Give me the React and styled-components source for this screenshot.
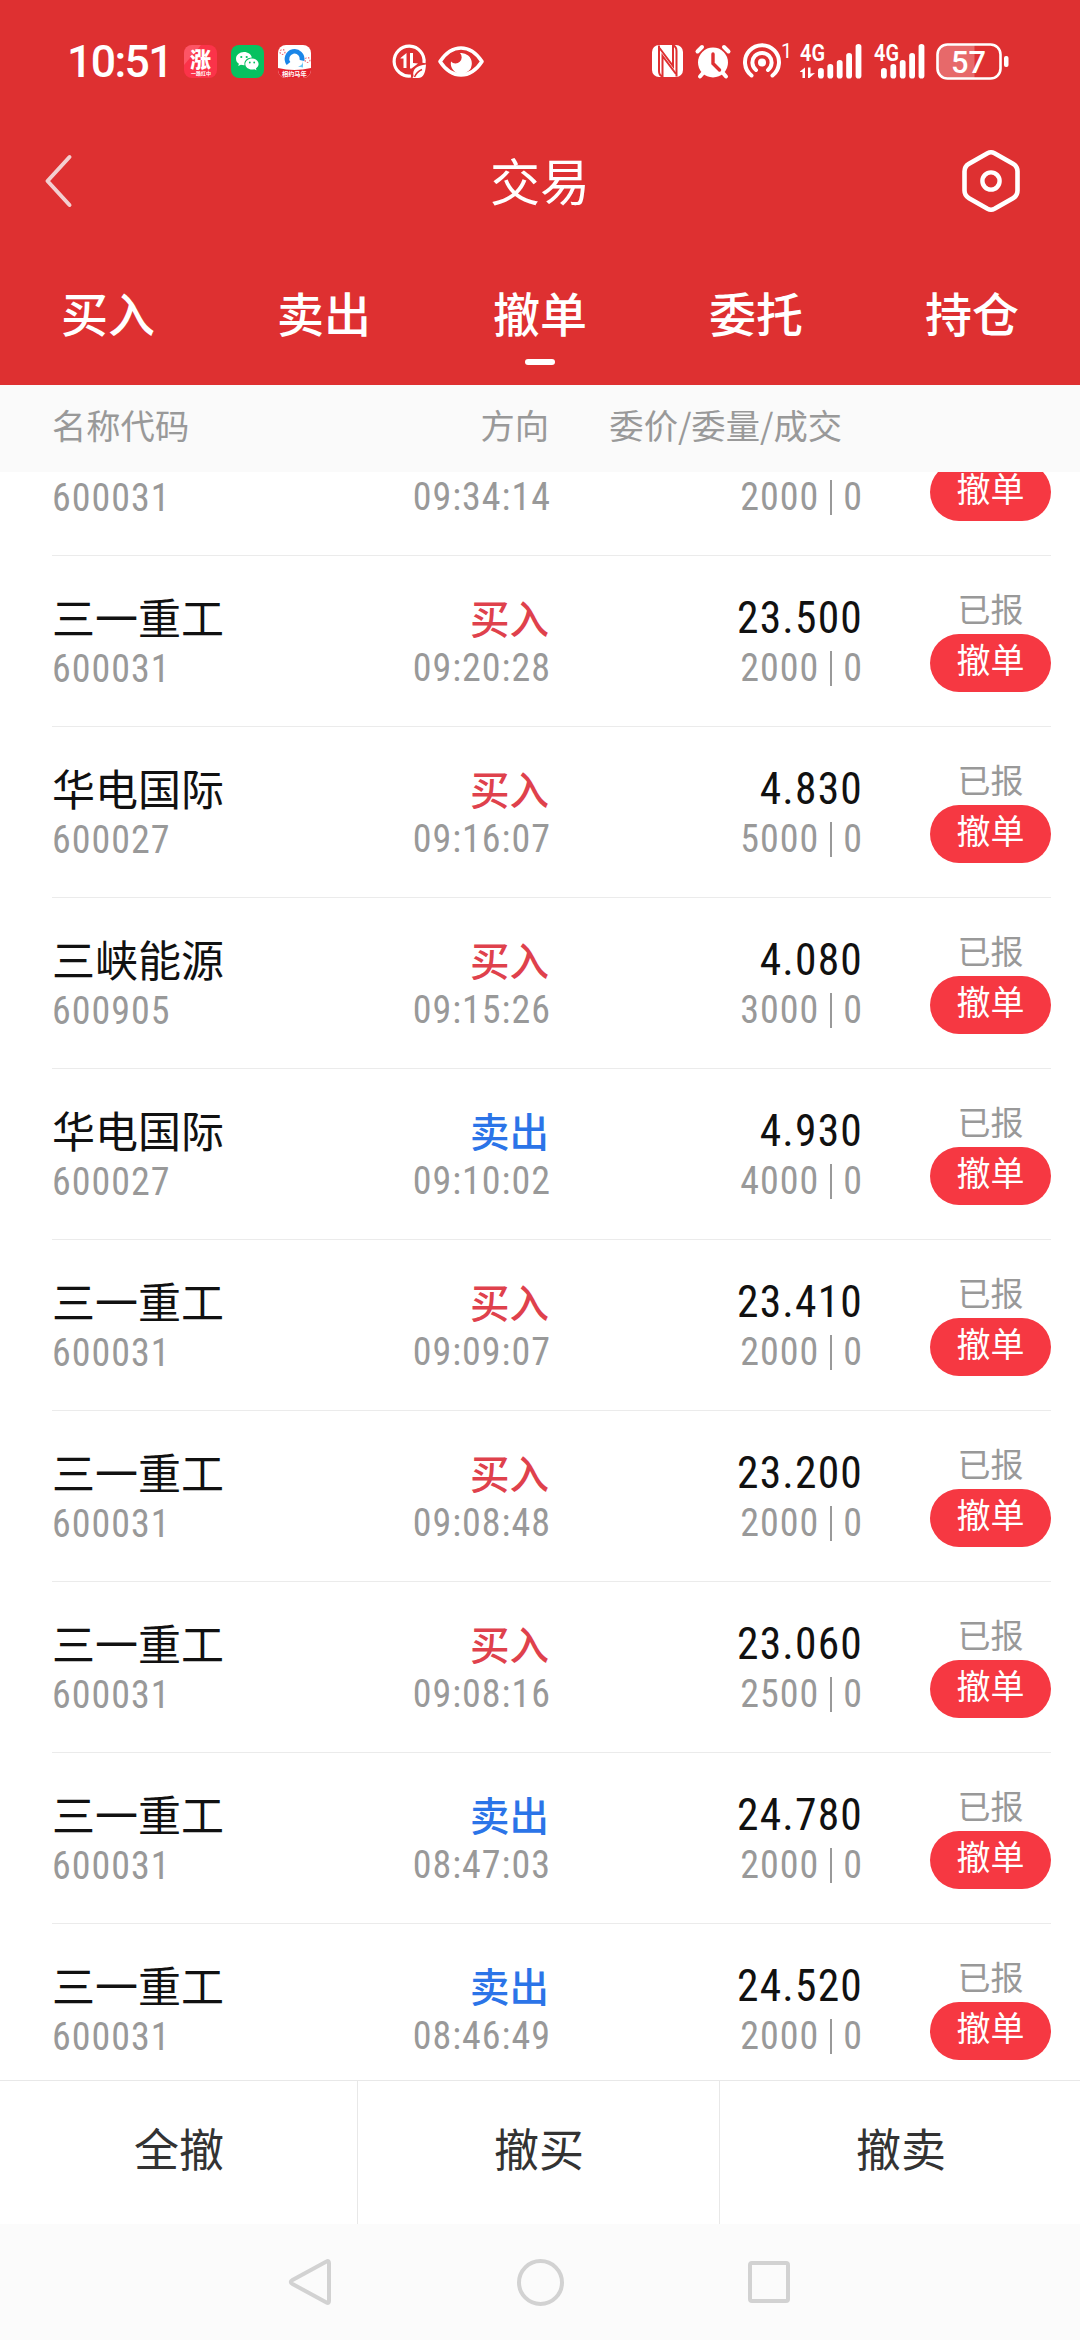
import React from 'react';
import styled, { createGlobalStyle } from 'styled-components';

const cjk = '"Noto Sans CJK SC", sans-serif';
const digits = '"Roboto Condensed", Roboto, "Noto Sans CJK SC", sans-serif';

const GlobalStyle = createGlobalStyle`
  * { box-sizing: border-box; }
  body { margin: 0; background: #fff; font-family: ${cjk}; }
`;

const Screen = styled.div`
  width: 1080px;
  height: 2340px;
  display: flex;
  flex-direction: column;
  overflow: hidden;
  background: #fff;
`;

const Header = styled.header`
  height: 385px;
  flex: none;
  background: #de3031;
  color: #fff;
`;

const StatusBar = styled.div`
  height: 122px;
  padding: 0 71px 0 67px;
  display: flex;
  justify-content: space-between;
  align-items: center;
`;

const StatusGroup = styled.div`
  display: flex;
  align-items: center;
`;

const Clock = styled.span`
  width: 117px;
  padding-top: 2px;
  font: 500 44.5px/50px Roboto, ${cjk};
  letter-spacing: -1.6px;
`;

const Glyph = styled.svg`
  display: block;
  flex: none;
  margin-left: ${p => p.$gap || 0}px;
  overflow: visible;
`;

const TitleBar = styled.div`
  height: 118px;
  padding: 0 60px 0 45px;
  display: grid;
  grid-template-columns: 1fr auto 1fr;
  align-items: center;
`;

const Title = styled.h1`
  margin: 0 -15px 4px 0;
  font: 400 50px/66px ${cjk};
`;

const TitleAction = styled.div`
  justify-self: ${p => p.$side};
`;

const Tabs = styled.nav`
  height: 145px;
  display: grid;
  grid-template-columns: repeat(5, 1fr);
`;

const Tab = styled.div`
  display: flex;
  flex-direction: column;
  align-items: center;
  padding-top: 39px;
  font: 500 47px/66px ${cjk};

  &::after {
    content: '';
    width: 30px;
    height: 6px;
    margin-top: 14px;
    border-radius: 3px;
    background: ${p => (p.$active ? '#fff' : 'transparent')};
  }
`;

const columns = `
  display: grid;
  grid-template-columns: 230px 267px 311px 191px;
  padding-left: 52px;
`;

const TableHead = styled.div`
  ${columns}
  height: 87px;
  flex: none;
  background: #fafafa;
  color: #999;
  font: 400 34.3px/79px ${cjk};
`;

const HeadCell = styled.span`
  text-align: ${p => p.$align || 'left'};
  padding-right: ${p => p.$inset || 0}px;
`;

const List = styled.main`
  height: 1608px;
  flex: none;
  overflow: hidden;
`;

const Rows = styled.div`
  margin-top: -87px;
`;

const Row = styled.div`
  ${columns}
  height: 171px;

  &::after {
    content: '';
    grid-column: 1 / -1;
    height: 1px;
    background: #ebebeb;
  }
`;

const Cell = styled.div`
  display: flex;
  flex-direction: column;
  align-items: ${p => p.$align || 'flex-start'};
  height: 170px;
  padding-top: ${p => p.$top || 36}px;
`;

const StockName = styled.span`
  height: 50px;
  margin: -1px 0 1px;
  font: 400 43px/50px ${cjk};
  color: #111;
`;

const Minor = styled.span`
  display: flex;
  align-items: center;
  color: #999;
  font: 400 38px/40px ${digits};
  letter-spacing: 1px;
  margin: ${p => p.$top || 0}px ${p => -(p.$pull || 0)}px 0 0;
`;

const Separator = styled.i`
  width: 2px;
  height: 35px;
  margin: 0 11px 0 11px;
  background: #999;
`;

const Side = styled.span`
  height: 50px;
  font: 500 39.5px/50px ${cjk};
  color: ${p => (p.$side === '买入' ? '#df414c' : '#2b74e8')};
`;

const Price = styled.span`
  height: 50px;
  margin: 2px -3px -2px 0;
  font: 450 43.5px/50px ${digits};
  letter-spacing: 1.2px;
  color: #111;
`;

const Status = styled.span`
  width: 121px;
  height: 46px;
  margin: -1px 0 1px;
  text-align: center;
  font: 400 33px/46px ${cjk};
  color: #999;
`;

const CancelButton = styled.button`
  width: 121px;
  height: 58px;
  margin-top: 2px;
  padding: 0 0 8px;
  border: 0;
  border-radius: 29px;
  background: #f63842;
  color: #fff;
  font: 400 34px/50px ${cjk};
`;

const ActionBar = styled.div`
  height: 144px;
  flex: none;
  display: grid;
  grid-template-columns: 358px 362px 360px;
  border-top: 1px solid #e8e8e8;
`;

const Action = styled.button`
  padding: 0 0 10px ${p => (p.$last ? 3 : 1)}px;
  border: 0;
  border-right: 1px solid ${p => (p.$last ? 'transparent' : '#e8e8e8')};
  background: #fff;
  color: #333;
  font: 400 45px/60px ${cjk};
`;

const NavBar = styled.footer`
  flex: 1;
  display: flex;
  justify-content: center;
  align-items: center;
  gap: 182px;
  background: #fbfbfb;
`;

// The first order is scrolled half under the column titles, so only its lower line shows.
const orders = [
  ['', '600031', '', '09:34:14', '', '2000', ''],
  ['三一重工', '600031', '买入', '09:20:28', '23.500', '2000', '已报'],
  ['华电国际', '600027', '买入', '09:16:07', '4.830', '5000', '已报'],
  ['三峡能源', '600905', '买入', '09:15:26', '4.080', '3000', '已报'],
  ['华电国际', '600027', '卖出', '09:10:02', '4.930', '4000', '已报'],
  ['三一重工', '600031', '买入', '09:09:07', '23.410', '2000', '已报'],
  ['三一重工', '600031', '买入', '09:08:48', '23.200', '2000', '已报'],
  ['三一重工', '600031', '买入', '09:08:16', '23.060', '2500', '已报'],
  ['三一重工', '600031', '卖出', '08:47:03', '24.780', '2000', '已报'],
  ['三一重工', '600031', '卖出', '08:46:49', '24.520', '2000', '已报'],
];

function OrderRow({ order }) {
  const [name, code, side, time, price, qty, status] = order;
  return (
    <Row>
      <Cell>
        <StockName>{name}</StockName>
        <Minor $top={7}>{code}</Minor>
      </Cell>
      <Cell $align="flex-end">
        <Side $side={side}>{side}</Side>
        <Minor $top={6} $pull={2}>{time}</Minor>
      </Cell>
      <Cell $align="flex-end">
        <Price>{price}</Price>
        <Minor $top={6} $pull={3}>{qty}<Separator />0</Minor>
      </Cell>
      <Cell $align="flex-end" $top={30}>
        <Status>{status}</Status>
        <CancelButton>撤单</CancelButton>
      </Cell>
    </Row>
  );
}

function Signal({ gap, arrows }) {
  const x0 = arrows ? 18 : 7;
  return (
    <Glyph $gap={gap} width={arrows ? 63 : 50} height="35" viewBox={arrows ? '0 0 63 35' : '0 0 50 35'} fill="#fff">
      <text x="0" y="17" fontFamily="Roboto, sans-serif" fontWeight="600" fontSize="23" textLength="25" lengthAdjust="spacingAndGlyphs">4G</text>
      {arrows && (
        <path d="M0 27.500 5 23.500V34H2.500V28H0zM8 23.500H10.500V29.500L15 29 9.500 34H8z" />
      )}
      {[24, 20, 16, 9, 0].map((top, i) => (
        <rect key={top} x={x0 + i * 9.4} y={top} width="5.8" height={34.5 - top} rx="2.800" />
      ))}
    </Glyph>
  );
}

export default function App() {
  return (
    <Screen>
      <GlobalStyle />
      <Header>
        <StatusBar>
          <StatusGroup>
            <Clock>10:51</Clock>
            <Glyph width="33" height="33" viewBox="0 0 33 33">
              <rect width="33" height="33" rx="8" fill="#fb3349" />
              <path d="M0 20V8a8 8 0 0 1 8-8h9z" fill="#ff6a78" opacity=".6" />
              <text x="6" y="22" fontFamily={cjk} fontWeight="900" fontSize="21" fill="#fff">涨</text>
              <text x="7" y="30" fontFamily={cjk} fontWeight="700" fontSize="5" fill="#fff">一路红中</text>
            </Glyph>
            <Glyph $gap={14} width="33" height="33" viewBox="0 0 33 33">
              <rect width="33" height="33" rx="8" fill="#07c160" />
              <path d="M13 7C8.600 7 5 10 5 13.700c0 2.100 1.100 3.900 2.900 5.100L7.200 21l2.700-1.300c1 .3 2 .5 3.100.5h.6a6 6 0 0 1-.2-1.500c0-3.500 3.400-6.300 7.400-6.300C20.200 9.300 17 7 13 7z" fill="#fff" />
              <path d="M21 13.500c-3.700 0-6.700 2.500-6.700 5.500s3 5.500 6.700 5.500c.8 0 1.600-.1 2.300-.3l2.200 1.100-.6-1.900c1.600-1 2.700-2.600 2.700-4.400 0-3-3-5.500-6.600-5.500z" fill="#fff" />
              <g fill="#07c160"><circle cx="10.300" cy="12" r="1.100" /><circle cx="15.700" cy="12" r="1.100" /><circle cx="18.800" cy="17.500" r=".9" /><circle cx="23.200" cy="17.500" r=".9" /></g>
            </Glyph>
            <Glyph $gap={14} width="33" height="33" viewBox="0 0 33 33">
              <rect width="33" height="33" rx="8" fill="#fff" />
              <path d="M0 23Q16 27 33 23V25a8 8 0 0 1-8 8H8a8 8 0 0 1-8-8z" fill="#e5202c" />
              <path d="M10.500 18.500A7.600 7.600 0 1 1 24 15.500" fill="none" stroke="#1a86e8" strokeWidth="4.600" />
              <path d="M25 15.500q0 5-5 6l5 1z" fill="#6fc4f5" />
              <g fill="none" stroke="#f0707a" strokeWidth="1.200" strokeDasharray="1.500 1.500"><circle cx="4.500" cy="7" r="2.500" /><circle cx="29.500" cy="15" r="2.500" /></g>
              <text x="4" y="31" fontFamily={cjk} fontWeight="700" fontSize="6.200" fill="#fff">相约马年</text>
            </Glyph>
            <Glyph $gap={81} width="34" height="35" viewBox="0 0 34 35">
              <path d="M32 19A15 15 0 1 0 19 32" fill="none" stroke="#fff" strokeWidth="3.200" />
              <path d="M8.500 14 14.500 9V24H11.500V14.500H8.500zM18 9H21V19L26 19.500 19.500 24.500H18z" fill="#fff" />
              <path d="M34 20.500C25 21.500 20 25 21.500 32l-1 2H26c6 0 7.500-6 8-13.500z" fill="#fff" />
              <path d="M22.500 33q2-5 7.500-7.500" fill="none" stroke="#de3031" strokeWidth="1.400" />
            </Glyph>
            <Glyph $gap={12} width="46" height="31" viewBox="0 0 46 31">
              <path d="M2 15.500Q11 2 23 2t21 13.500Q35 29 23 29T2 15.500z" fill="none" stroke="#fff" strokeWidth="3.600" strokeLinejoin="round" />
              <path d="M22 7A10.500 10.500 0 1 1 13 15.500A5.500 5.500 0 1 0 22 7z" fill="#fff" />
            </Glyph>
          </StatusGroup>
          <StatusGroup>
            <Glyph width="31" height="32" viewBox="0 0 31 32">
              <rect width="31" height="32" rx="7" fill="#fff" />
              <g fill="none" stroke="#de3031" strokeWidth="2">
                <path d="M7 .500V26Q7 30.500 10.500 31.500V11L24 29" />
                <path d="M24.500 31.500V6Q24.500 1.500 21 .500V21L7.500 3" />
              </g>
            </Glyph>
            <Glyph $gap={12} width="36" height="34" viewBox="0 0 36 34">
              <circle cx="18" cy="18.500" r="15" fill="#fff" />
              <g stroke="#fff" strokeWidth="4" strokeLinecap="round">
                <path d="M2.500 7.500 7 3M33.500 7.500 29 3M8 29 5 32.500M28 29l3 3.500" />
              </g>
              <path d="M18 10V19.500L24.500 26" fill="none" stroke="#de3031" strokeWidth="3.400" strokeLinecap="round" />
            </Glyph>
            <Glyph $gap={12} width="48" height="36" viewBox="0 0 48 36">
              <circle cx="19" cy="19.500" r="4" fill="#fff" />
              <g fill="none" stroke="#fff" strokeWidth="4" strokeLinecap="round">
                <path d="M8.500 32.500A17 17 0 1 1 29.500 32.500" />
                <path d="M13 27A9.600 9.600 0 1 1 25 27" />
              </g>
              <text x="38" y="15" fontFamily="Roboto, sans-serif" fontWeight="400" fontSize="20" fill="#fff">1</text>
            </Glyph>
            <Signal gap={9} arrows />
            <Signal gap={11} />
            <Glyph $gap={12} width="73" height="37" viewBox="0 0 73 37">
              <path d="M38.500 2V35H12A10 10 0 0 1 2 25V12A10 10 0 0 1 12 2z" fill="#fff" opacity=".28" />
              <rect x="1.500" y="1.500" width="63" height="34" rx="10" fill="none" stroke="#fff" strokeWidth="2.600" />
              <rect x="68" y="13" width="4.500" height="11" rx="2" fill="#fff" />
              <text x="15" y="30" fontFamily="Roboto, sans-serif" fontWeight="500" fontSize="32" textLength="35" lengthAdjust="spacingAndGlyphs" fill="#fff">57</text>
            </Glyph>
          </StatusGroup>
        </StatusBar>
        <TitleBar>
          <TitleAction $side="start">
            <Glyph width="27" height="54" viewBox="0 0 27 54">
              <path d="M24.500 3 2.500 27 24.500 51" fill="none" stroke="#f3cfd0" strokeWidth="4" strokeLinecap="round" strokeLinejoin="round" />
            </Glyph>
          </TitleAction>
          <Title>交易</Title>
          <TitleAction $side="end">
            <Glyph width="58" height="62" viewBox="0 0 58 62">
              <path d="M25.500 3.200Q29 1.300 32.500 3.200L51 13.800Q55.500 16.500 55.500 21.500V40.500Q55.500 45.500 51 48.200L32.500 58.800Q29 60.700 25.500 58.800L7 48.200Q2.500 45.500 2.500 40.500V21.500Q2.500 16.500 7 13.800z" fill="none" stroke="#fff" strokeWidth="4.600" />
              <circle cx="29" cy="31" r="8.600" fill="none" stroke="#fff" strokeWidth="4.400" />
            </Glyph>
          </TitleAction>
        </TitleBar>
        <Tabs>
          {['买入', '卖出', '撤单', '委托', '持仓'].map(t => (
            <Tab key={t} $active={t === '撤单'}>{t}</Tab>
          ))}
        </Tabs>
      </Header>
      <TableHead>
        <HeadCell>名称代码</HeadCell>
        <HeadCell $align="right">方向</HeadCell>
        <HeadCell $align="right" $inset={18}>委价/委量/成交</HeadCell>
      </TableHead>
      <List>
        <Rows>
          {orders.map(o => <OrderRow key={o[3]} order={o} />)}
        </Rows>
      </List>
      <ActionBar>
        <Action>全撤</Action>
        <Action>撤买</Action>
        <Action $last>撤卖</Action>
      </ActionBar>
      <NavBar>
        <Glyph width="47" height="48" viewBox="0 0 47 48">
          <path d="M38.500 3.500Q41 2 41 5V43Q41 46 38.500 44.500L4.500 26Q1 24 4.500 22z" fill="none" stroke="#d2d2d2" strokeWidth="4" strokeLinejoin="round" />
        </Glyph>
        <Glyph width="47" height="47" viewBox="0 0 47 47">
          <circle cx="23.500" cy="23.500" r="21.500" fill="none" stroke="#d2d2d2" strokeWidth="4" />
        </Glyph>
        <Glyph width="47" height="47" viewBox="0 0 47 47">
          <rect x="4" y="4" width="38" height="38" rx="2" fill="none" stroke="#d2d2d2" strokeWidth="4" />
        </Glyph>
      </NavBar>
    </Screen>
  );
}
